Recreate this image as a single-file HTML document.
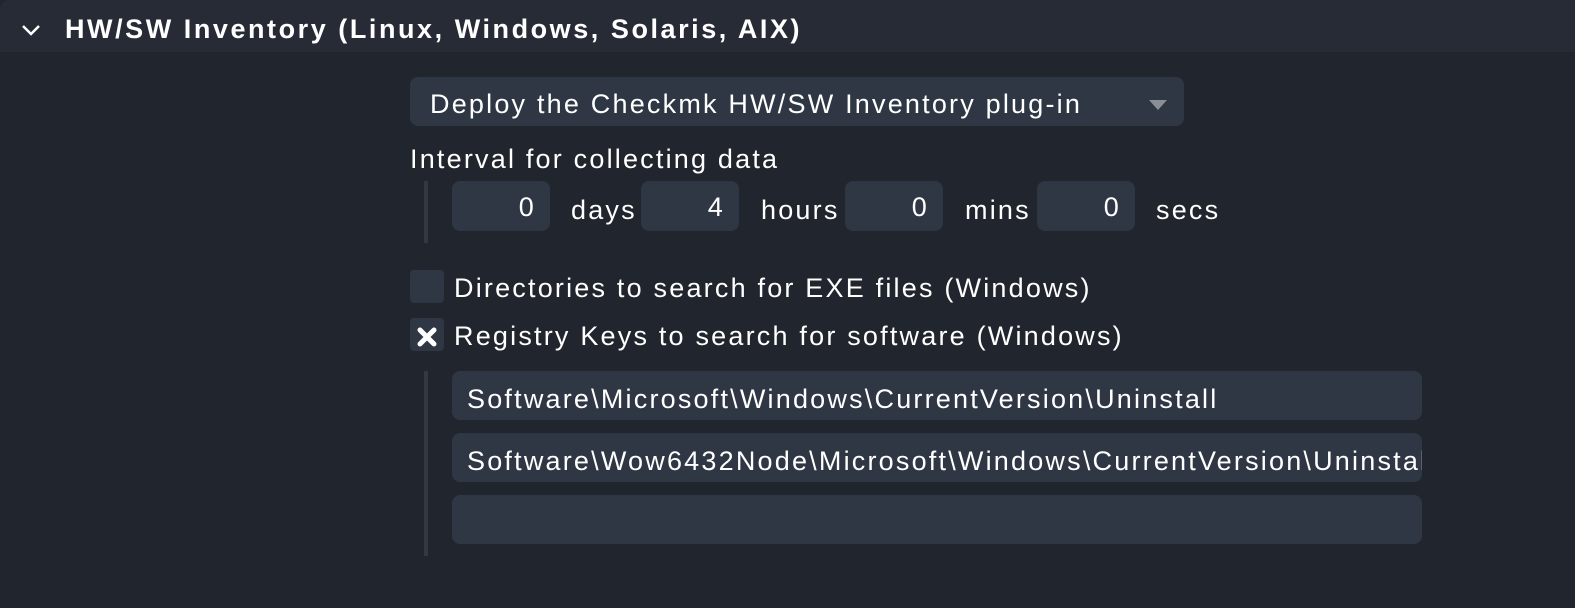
<!DOCTYPE html>
<html><head><style>
*{margin:0;padding:0;box-sizing:border-box}
body{width:1575px;height:608px;background:#21252d;font-family:"Liberation Sans",sans-serif;color:#fff;position:relative;overflow:hidden;font-size:27px;letter-spacing:2.2px}
.a{position:absolute}
.hdr{left:0;top:0;width:1575px;height:52px;background:#262b35;border-top-left-radius:10px}
.inp{background:#2f3744;border-radius:8px;position:absolute}
.lbl{position:absolute;line-height:30px;white-space:nowrap}
.num{text-align:right;padding-right:14px;line-height:52px}
.bar{position:absolute;left:424px;width:4px;background:#323844}
</style></head><body>
<div class="a hdr"></div>
<svg class="a" style="left:20px;top:22px" width="22" height="16"><path d="M3 4 L11 12 L19 4" stroke="#fff" stroke-width="2.5" fill="none"/></svg>
<div class="lbl" style="left:65px;top:14px;font-weight:bold;font-size:27px;letter-spacing:2.55px">HW/SW Inventory (Linux, Windows, Solaris, AIX)</div>

<div class="inp" style="left:410px;top:77px;width:774px;height:49px"></div>
<div class="lbl" style="left:430px;top:89px">Deploy the Checkmk HW/SW Inventory plug-in</div>
<svg class="a" style="left:1148px;top:99px" width="20" height="12"><path d="M1 1 L19 1 L10 11Z" fill="#8a8f97"/></svg>

<div class="lbl" style="left:410px;top:144px">Interval for collecting data</div>
<div class="bar" style="top:181px;height:62px"></div>
<div class="inp num" style="left:452px;top:181px;width:98px;height:50px">0</div>
<div class="lbl" style="left:571px;top:195px">days</div>
<div class="inp num" style="left:641px;top:181px;width:98px;height:50px">4</div>
<div class="lbl" style="left:761px;top:195px">hours</div>
<div class="inp num" style="left:845px;top:181px;width:98px;height:50px">0</div>
<div class="lbl" style="left:965px;top:195px">mins</div>
<div class="inp num" style="left:1037px;top:181px;width:98px;height:50px">0</div>
<div class="lbl" style="left:1156px;top:195px">secs</div>

<div class="inp" style="left:410px;top:270px;width:34px;height:33px;border-radius:4px"></div>
<div class="lbl" style="left:454px;top:273px">Directories to search for EXE files (Windows)</div>
<div class="inp" style="left:410px;top:318px;width:34px;height:33px;border-radius:4px"></div>
<svg class="a" style="left:416px;top:326px" width="22" height="22"><path d="M4 4 L18 18 M18 4 L4 18" stroke="#fff" stroke-width="5" stroke-linecap="round"/></svg>
<div class="lbl" style="left:454px;top:321px">Registry Keys to search for software (Windows)</div>

<div class="bar" style="top:371px;height:185px"></div>
<div class="inp" style="left:452px;top:371px;width:970px;height:49px"></div>
<div class="lbl" style="left:467px;top:384px">Software\Microsoft\Windows\CurrentVersion\Uninstall</div>
<div class="inp" style="left:452px;top:433px;width:970px;height:49px;overflow:hidden"><div class="lbl" style="left:15px;top:13px">Software\Wow6432Node\Microsoft\Windows\CurrentVersion\Uninstall</div></div>
<div class="inp" style="left:452px;top:495px;width:970px;height:49px"></div>
</body></html>
